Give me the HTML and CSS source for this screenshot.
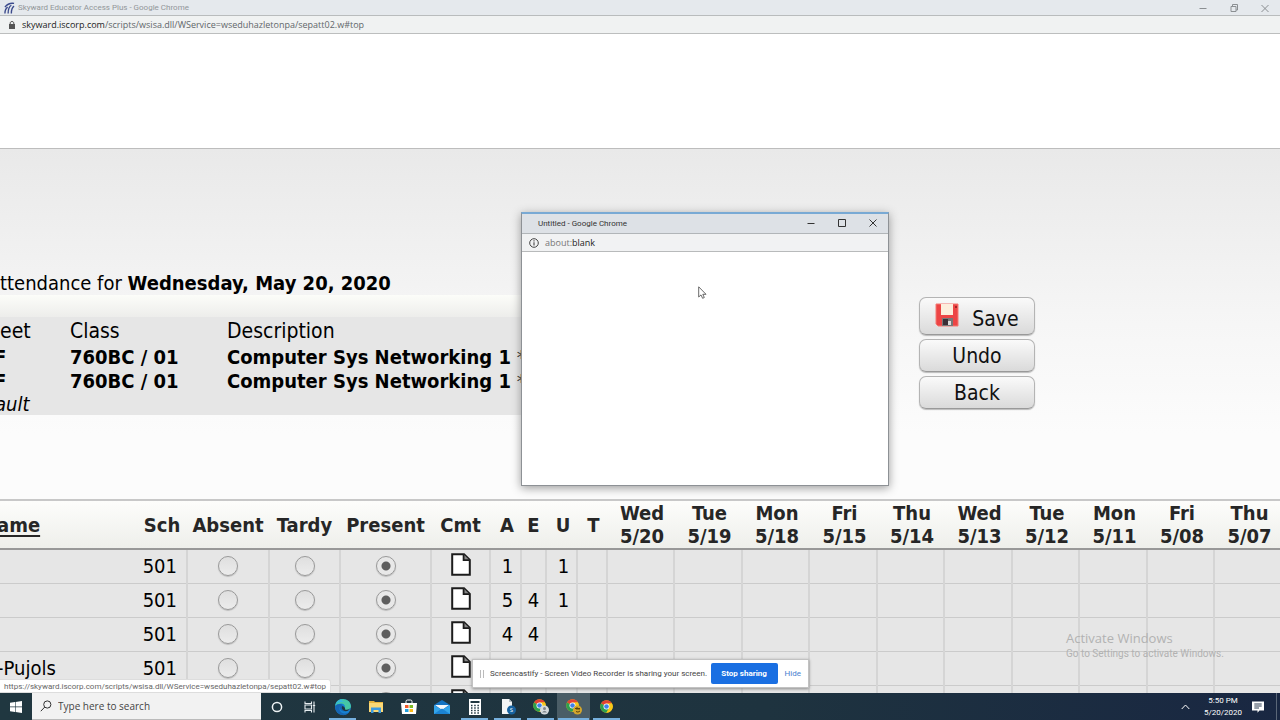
FILE: index.html
```html
<!DOCTYPE html>
<html lang="en">
<head>
<meta charset="utf-8">
<title>Skyward Educator Access Plus</title>
<link rel="stylesheet" href="styles.css">
</head>
<body>
<svg class="defs" width="0" height="0" aria-hidden="true">
  <symbol id="doc" viewBox="0 0 20 23"><path d="M1.2 1.2H13L18.8 7V21.8H1.2Z" fill="#fff" stroke="#1c1c1c" stroke-width="2"/><path d="M12.6 1.5V7.2H18.6" fill="#888" stroke="#1c1c1c" stroke-width="1.8"/></symbol>
  <symbol id="chrome" viewBox="0 0 48 48"><circle cx="24" cy="24" r="23" fill="#f8c819"/><path d="M24 24L4 12.500A23 23 0 0 1 44 12.500H24Z" fill="#e34133"/><path d="M4 12.500A23 23 0 0 0 24 47L34 29.500L24 24Z" fill="#2da04e"/><path d="M44 12.500A23 23 0 0 1 23 47L34 29.500L30 13Z" fill="#f8c819"/><circle cx="24" cy="24" r="11" fill="#fff"/><circle cx="24" cy="24" r="8.500" fill="#3f80e8"/></symbol>
</svg>
<div class="desktop">
  <header class="titlebar">
    <svg class="favicon" viewBox="0 0 12 12"><path d="M1 12Q1 7 4 5M4.500 12Q4.500 5 8 3M8 12Q8 6 11 4M1 5Q5 0 11 1" fill="none" stroke="#3b4a8c" stroke-width="1.500"/></svg>
    <span class="titletext">Skyward Educator Access Plus - Google Chrome</span>
    <div class="wincontrols">
      <button aria-label="Minimize"><svg viewBox="0 0 10 10"><path d="M1.500 5.500H8.500" /></svg></button>
      <button aria-label="Restore"><svg viewBox="0 0 10 10"><path d="M2 3.500H7V8.500H2ZM3.500 3.500V1.500H8.500V7H7"/></svg></button>
      <button aria-label="Close"><svg viewBox="0 0 10 10"><path d="M1.500 2L8.500 9M8.500 2L1.500 9"/></svg></button>
    </div>
  </header>
  <div class="addressbar">
    <svg class="lock" viewBox="0 0 8 10"><path d="M1 4H7V9H1Z" fill="#555"/><path d="M2.200 4V2.500Q4 0 5.800 2.500V4" fill="none" stroke="#555"/></svg>
    <span class="url"><b>skyward.iscorp.com</b>/scripts/wsisa.dll/WService=wseduhazletonpa/sepatt02.w#top</span>
  </div>

  <main class="page">
    <div class="banner"></div>
    <div class="upper">
      <section class="classinfo">
        <h1>ttendance for <b>Wednesday, May 20, 2020</b></h1>
        <div class="band"></div>
        <table class="classes">
          <colgroup><col class="c-sheet"><col class="c-class"><col></colgroup>
          <thead><tr><th>eet</th><th>Class</th><th>Description</th></tr></thead>
          <tbody>
            <tr><td class="cut">F</td><td>760BC / 01</td><td>Computer Sys Networking 1<span class="star"> *</span></td></tr>
            <tr><td class="cut">F</td><td>760BC / 01</td><td>Computer Sys Networking 1<span class="star"> *</span></td></tr>
            <tr class="last"><td class="default">ault</td><td></td><td></td></tr>
          </tbody>
        </table>
      </section>
      <div class="actions">
        <button class="save"><svg viewBox="0 0 24 24"><path d="M1 1H23V23H3L1 21Z" fill="#ed4545" stroke="#f47b74"/><path d="M6 1H18V12H6Z" fill="#fdeedd"/><path d="M7 15H18V23H7Z" fill="#777"/><path d="M8 16H13V22H8Z" fill="#3b3038"/><path d="M13 18H16V22H13Z" fill="#ddd"/><path d="M20 3H22V5H20Z" fill="#a32525"/></svg>Save</button>
        <button>Undo</button>
        <button>Back</button>
      </div>
    </div>
    <table class="roster">
      <colgroup><col class="w-name"><col class="w-sch"><col class="w-abs"><col class="w-tar"><col class="w-pre"><col class="w-cmt"><col class="w-a"><col class="w-e"><col class="w-u"><col class="w-t"><col class="w-day"><col class="w-day2"><col class="w-day"><col class="w-day2"><col class="w-day"><col class="w-day2"><col class="w-day"><col class="w-day2"><col class="w-day"><col class="w-day2"></colgroup>
      <thead><tr><th class="name"><a href="#">ame</a></th><th class="flush">Sch</th><th class="flush">Absent</th><th class="flush">Tardy</th><th class="flush">Present</th><th class="flush">Cmt</th><th>A</th><th class="flush">E</th><th>U</th><th>T</th><th>Wed<br>5/20</th><th>Tue<br>5/19</th><th>Mon<br>5/18</th><th>Fri<br>5/15</th><th>Thu<br>5/14</th><th>Wed<br>5/13</th><th>Tue<br>5/12</th><th>Mon<br>5/11</th><th>Fri<br>5/08</th><th>Thu<br>5/07</th></tr></thead>
      <tbody>
        <tr><td class="name"></td><td class="sch">501</td><td><input type="radio" name="r1" aria-label="Absent"></td><td><input type="radio" name="r1" aria-label="Tardy"></td><td><input type="radio" name="r1" aria-label="Present" checked></td><td><svg class="doc"><use href="#doc"/></svg></td><td class="num">1</td><td></td><td class="num">1</td><td></td><td></td><td></td><td></td><td></td><td></td><td></td><td></td><td></td><td></td><td></td></tr>
        <tr><td class="name"></td><td class="sch">501</td><td><input type="radio" name="r2" aria-label="Absent"></td><td><input type="radio" name="r2" aria-label="Tardy"></td><td><input type="radio" name="r2" aria-label="Present" checked></td><td><svg class="doc"><use href="#doc"/></svg></td><td class="num">5</td><td>4</td><td class="num">1</td><td></td><td></td><td></td><td></td><td></td><td></td><td></td><td></td><td></td><td></td><td></td></tr>
        <tr><td class="name"></td><td class="sch">501</td><td><input type="radio" name="r3" aria-label="Absent"></td><td><input type="radio" name="r3" aria-label="Tardy"></td><td><input type="radio" name="r3" aria-label="Present" checked></td><td><svg class="doc"><use href="#doc"/></svg></td><td class="num">4</td><td>4</td><td></td><td></td><td></td><td></td><td></td><td></td><td></td><td></td><td></td><td></td><td></td><td></td></tr>
        <tr><td class="name">-Pujols</td><td class="sch">501</td><td><input type="radio" name="r4" aria-label="Absent"></td><td><input type="radio" name="r4" aria-label="Tardy"></td><td><input type="radio" name="r4" aria-label="Present" checked></td><td><svg class="doc"><use href="#doc"/></svg></td><td></td><td></td><td></td><td></td><td></td><td></td><td></td><td></td><td></td><td></td><td></td><td></td><td></td><td></td></tr>
        <tr><td class="name"></td><td class="sch"></td><td><input type="radio" name="r5" aria-label="Absent"></td><td><input type="radio" name="r5" aria-label="Tardy"></td><td><input type="radio" name="r5" aria-label="Present" checked></td><td><svg class="doc"><use href="#doc"/></svg></td><td></td><td></td><td></td><td></td><td></td><td></td><td></td><td></td><td></td><td></td><td></td><td></td><td></td><td></td></tr>
      </tbody>
    </table>
    <div class="watermark"><div class="wm-title">Activate Windows</div><div>Go to Settings to activate Windows.</div></div>
    <div class="status">https://skyward.iscorp.com/scripts/wsisa.dll/WService=wseduhazletonpa/sepatt02.w#top</div>
    <div class="sharing">
      <span class="grip"></span>
      <span class="sharetext">Screencastify - Screen Video Recorder is sharing your screen.</span>
      <button>Stop sharing</button>
      <a href="#">Hide</a>
    </div>
  </main>

  <section class="popup">
    <div class="poptitle"><span>Untitled - Google Chrome</span>
      <div class="wincontrols dark">
        <button aria-label="Minimize"><svg viewBox="0 0 10 10"><path d="M1.500 5.500H8.500"/></svg></button>
        <button aria-label="Maximize"><svg viewBox="0 0 10 10"><path d="M1.500 1.500H8.500V8.500H1.500Z"/></svg></button>
        <button aria-label="Close"><svg viewBox="0 0 10 10"><path d="M1.500 1.500L8.500 8.500M8.500 1.500L1.500 8.500"/></svg></button>
      </div>
    </div>
    <div class="popaddress"><svg viewBox="0 0 10 10"><circle cx="5" cy="5" r="4.300" fill="none" stroke="#444" stroke-width="1"/><path d="M5 4.300V7.600M5 2.300V3.400" stroke="#444" stroke-width="1.100"/></svg><span>about:<b>blank</b></span></div>
    <div class="popbody"></div>
  </section>
  <svg class="cursor" viewBox="0 0 9 13"><path d="M.7.8V11L3 8.900L4.600 12.300L6.300 11.500L4.800 8.300H8Z" fill="#fff" stroke="#444" stroke-width=".8"/></svg>

  <footer class="taskbar">
    <button class="start" aria-label="Start"><svg viewBox="0 0 12 12"><path d="M0 1.800L5 1.100V5.600H0ZM5.600 1L12 0V5.600H5.600ZM0 6.300H5V10.900L0 10.200ZM5.600 6.300H12V12L5.600 11Z" fill="#fff"/></svg></button>
    <label class="search"><svg viewBox="0 0 12 12"><circle cx="7.300" cy="4.500" r="3.600" fill="none" stroke="#333"/><path d="M4.800 7L.8 11.200" stroke="#333"/></svg><input type="text" placeholder="Type here to search" aria-label="Type here to search"></label>
    <nav class="apps">
      <button aria-label="Cortana"><svg viewBox="0 0 16 16"><circle cx="8" cy="8" r="4.600" fill="none" stroke="#eef3f5" stroke-width="1.500"/></svg></button>
      <button aria-label="Task view"><svg viewBox="0 0 16 16"><path d="M3 2.500V4.500H9.500V2.500M3 13.500V11.500H9.500V13.500M3 6H9.500V10H3ZM12 2.500V13.500M10.800 6.500H13.200" fill="none" stroke="#e5ecef" stroke-width="1.100"/></svg></button>
      <button class="open" aria-label="Edge"><svg class="big" viewBox="0 0 18 18"><circle cx="9" cy="9" r="8" fill="#1682d4"/><path d="M1.200 8Q2 1 9 1Q16 1.500 17 8Q17 12 12 12Q10 11.800 11 9.500Q11 5.500 7 5.500Q3 5.500 1.200 8Z" fill="#45c7a4"/><path d="M1.200 7.500Q3 1 9 1Q5 2 12 4Q4 3 1.200 7.500Z" fill="#35b9dc"/><path d="M6 8Q4 14 10 15.500Q14 16 16 12.500Q13 18 8 17Q1 15 1.200 8Q3 5.500 7 6Q9 6.500 9 9Q7 12 11 13.500Q8 14 6 11Z" fill="#1565b4"/><path d="M8.200 8Q6.500 12 11.500 13.300Q15 13 16.800 9.500Q15 12.500 11 11.500Q11.600 9 8.200 8Z" fill="#203640"/></svg></button>
      <button aria-label="File Explorer"><svg viewBox="0 0 16 16"><path d="M1 2H6L7 3H15V13H1Z" fill="#e8b63f"/><path d="M1 4H15V13H1Z" fill="#fbd976"/><path d="M3 8.500H13V14H10.500V11H5.500V14H3Z" fill="#3d9be0"/></svg></button>
      <button aria-label="Microsoft Store"><svg viewBox="0 0 16 16"><path d="M5 4V2.500Q5 1 6.500 1H9.500Q11 1 11 2.500V4" fill="none" stroke="#fff"/><path d="M0 4H16L15 15H1Z" fill="#fff"/><path d="M4 6H7.500V9H4Z" fill="#f15a2b"/><path d="M8.500 6H12V9H8.500Z" fill="#7dba25"/><path d="M4 10H7.500V13H4Z" fill="#24a0de"/><path d="M8.500 10H12V13H8.500Z" fill="#fbba19"/></svg></button>
      <button aria-label="Mail"><svg viewBox="0 0 16 16"><path d="M0 6L8 1L16 6V15H0Z" fill="#1473c2"/><path d="M1 6H15L8 11Z" fill="#f4f8fb"/><path d="M0 6L8 11L16 6V15H0Z" fill="#35a5ea"/><path d="M0 15L8 9.500L16 15Z" fill="#1b83d3"/></svg></button>
      <button class="open" aria-label="Calculator"><svg viewBox="0 0 16 16"><path d="M2 0H14V16H2Z" fill="#fff"/><path d="M3.500 3H12.500" stroke="#203640" stroke-width="2"/><path d="M4 6.500H12.500M4 9H12.500M4 11.500H12.500M4 14H12.500" stroke="#203640" stroke-width="1.300" stroke-dasharray="1.500 1.700"/></svg></button>
      <button class="open" aria-label="Skyward"><svg viewBox="0 0 16 16"><path d="M2 0H9L12 3V15H2Z" fill="#f3f5f6"/><path d="M9 0V3H12" fill="#b7bfc4"/><circle cx="11.500" cy="11" r="4.500" fill="#17629f"/><text x="11.500" y="13.300" font-size="6" text-anchor="middle" fill="#fff">S</text></svg></button>
      <button class="open" aria-label="Chrome profile"><svg viewBox="0 0 16 16"><svg width="13" height="13"><use href="#chrome"/></svg><circle cx="11.500" cy="11" r="4.500" fill="#d6dadd"/><circle cx="11.500" cy="9.500" r="1.500" fill="#7f878d"/><path d="M9 13.500Q11.500 10 14 13.500Z" fill="#7f878d"/></svg></button>
      <button class="open active" aria-label="Chrome window"><svg viewBox="0 0 16 16"><svg width="13" height="13"><use href="#chrome"/></svg><circle cx="11.500" cy="11" r="4.500" fill="#d3a62c"/><path d="M9 9.500H14M10 12.500Q12 14 14 12M11 8V11M13 9V11" fill="none" stroke="#59430d"/></svg></button>
      <button class="open" aria-label="Chrome"><svg viewBox="0 0 16 16"><svg x="1" y="1" width="14" height="14"><use href="#chrome"/></svg></svg></button>
    </nav>
    <div class="tray">
      <svg class="chev" viewBox="0 0 9 6"><path d="M.7 5L4.500 1L8.300 5" fill="none" stroke="#fff"/></svg>
      <div class="clock"><div>5:50 PM</div><div>5/20/2020</div></div>
      <svg class="note" viewBox="0 0 12 12"><path d="M0 .5H12V9.500H7.500L5.500 11.800V9.500H0Z" fill="#fff"/><path d="M2.300 3H9.700M2.300 5H9.700M2.300 7H7" stroke="#1a2a44" stroke-width=".9"/></svg>
      <span class="showdesk"></span>
    </div>
  </footer>
</div>
</body>
</html>
```
FILE: styles.css
```css
* { box-sizing: border-box; }
body { margin: 0; font-family: "Open Sans", "Noto Sans", sans-serif; overflow: hidden; }
button { font: inherit; border: 0; padding: 0; background: none; }
svg { display: block; flex: none; }
.defs { position: absolute; }
.desktop { position: relative; display: flex; flex-direction: column; height: 100vh; overflow: hidden; }

.titlebar { display: flex; align-items: center; height: 16px; padding-left: 4px; background: #e5e9ed; border-bottom: 1px solid #b9bcbd; font-family: Roboto, sans-serif; font-size: 8px; color: #929699; }
.favicon { width: 11px; height: 12px; margin-right: 3px; }
.titletext { flex: 1; }
.wincontrols { display: flex; padding-right: 10px; gap: 21px; }
.wincontrols button, .wincontrols svg { width: 10px; height: 10px; }
.wincontrols path { fill: none; stroke: #8b8f92; stroke-width: 1; }
.wincontrols.dark path { stroke: #333; }
.addressbar { display: flex; align-items: center; gap: 6px; height: 18px; padding-left: 8px; background: #f0f2f2; border-bottom: 1px solid #bcbebe; font-size: 9px; color: #62676a; }
.addressbar b, .popaddress b { font-weight: 400; color: #222; }
.lock { width: 8px; height: 10px; }

.page { position: relative; flex: 1; min-height: 0; overflow: hidden; background: linear-gradient(#e9e9e9 115px, #f6f6f6 290px, #fcfcfc 400px); font-family: "DejaVu Sans Condensed", "Noto Sans", sans-serif; font-size: 20px; }
.banner { height: 115px; background: #fff; border-bottom: 1px solid #bdbdbd; }
.upper { display: flex; height: 350px; gap: 58px; padding-top: 122px; }
.classinfo { width: 861px; }
h1 { margin: 0; font-size: 20px; line-height: 24px; font-weight: 400; white-space: nowrap; }
.band { height: 22px; background: linear-gradient(#fcfdf9, #ededeb); }
.classes { width: 100%; table-layout: fixed; border-collapse: collapse; background: #e6e6e6; white-space: nowrap; }
.classes th, .classes td { padding: 0; height: 24px; line-height: 24px; text-align: left; font-weight: 700; }
.classes th { height: 28px; font-weight: 400; font-size: 21px; }
.classes .last td { height: 22px; line-height: 22px; }
.c-sheet { width: 70px; }
.c-class { width: 157px; }
.classes .cut { text-indent: -6px; }
.classes .default { font-weight: 400; font-style: italic; text-indent: -5px; }
.classes .star { font-weight: 400; }
.actions { display: flex; flex-direction: column; gap: 4px; width: 116px; padding-top: 26px; }
.actions button { display: flex; align-items: center; justify-content: center; height: 33px; padding-top: 1px; border: 1px solid #b4b4b4; border-bottom-color: #999; border-radius: 7px; background: linear-gradient(#fafafa, #dadada); box-shadow: 0 1px 1px #bbb; color: #111; font-size: 21px; }
.actions .save { height: 38px; gap: 13px; padding-top: 5px; }
.save svg { width: 24px; height: 24px; margin-bottom: 7px; }

.roster { width: 1282px; table-layout: fixed; border-collapse: collapse; background: #e6e6e6; }
.roster th { height: 49px; padding: 1px 0 0 3px; border-top: 2px solid #c8c8c8; border-bottom: 2px solid #989898; background: linear-gradient(#fdfdfb, #eeefeb); color: #262626; line-height: 23px; font-weight: 700; }
.roster th.flush { padding-left: 0; }
.roster td { height: 34px; padding: 0; border: 2px solid #d5d5d5; border-top: 1px solid #cbcbcb; border-bottom: 1px solid #cbcbcb; text-align: center; line-height: 24px; }
.roster .name { text-align: left; border-left: 0; white-space: nowrap; padding-left: 0; text-indent: -3px; }
.roster td.name { border-right: 0; }
.roster .sch { border-left: 0; text-align: right; padding-right: 9px; }
.roster .num { padding-left: 4px; }
.name a { color: inherit; text-underline-offset: 3px; }
.w-name { width: 137px; } .w-sch { width: 50px; } .w-abs { width: 82px; } .w-tar { width: 71px; } .w-pre { width: 91px; }
.w-cmt { width: 59px; } .w-a { width: 31px; } .w-e { width: 25px; } .w-u { width: 31px; } .w-t { width: 30px; }
.w-day { width: 67px; } .w-day2 { width: 68px; }
.roster input { display: block; appearance: none; width: 20px; height: 20px; margin: 0 auto; border: 1px solid #999; border-radius: 50%; background: linear-gradient(#dfdfdf, #ececec); box-shadow: 0 1px 1px #bbb; }
.roster input:checked { background: radial-gradient(circle, #5e5e5e 4px, #e8e8e8 5px); }
.doc { width: 20px; height: 23px; margin: 0 auto 4px; }

.watermark { position: absolute; left: 1066px; bottom: 33px; font: 10px/13px Roboto, sans-serif; color: #b2b2b2; white-space: nowrap; }
.wm-title { font-family: "Open Sans", sans-serif; font-size: 13px; line-height: 17px; }
.status { position: absolute; left: 0; bottom: 0; height: 14px; padding: 0 4px; border: 1px solid #ddd; border-left: 0; border-radius: 0 3px 0 0; background: #fff; font: 8px/13px Roboto, sans-serif; color: #666; white-space: nowrap; }
.sharing { position: absolute; left: 472px; bottom: 5px; display: flex; align-items: center; height: 29px; width: 337px; padding: 0 7px; background: #fff; border: 1px solid #c2c2c2; box-shadow: 0 1px 3px #888; font: 8px/12px Roboto, sans-serif; color: #444; white-space: nowrap; }
.grip { width: 4px; height: 8px; margin-right: 6px; border: solid #bbb; border-width: 0 1px; }
.sharetext { flex: 1; min-width: 0; }
.sharing button { flex: none; width: 67px; height: 21px; margin-right: 7px; border-radius: 2px; background: #1a6fe2; color: #fff; font-weight: 700; }
.sharing a { color: #4a80cf; text-decoration: none; }

.popup { position: absolute; left: 521px; top: 212px; width: 368px; height: 274px; display: flex; flex-direction: column; border: 1px solid #8d9195; border-top: 2px solid #78a9d4; background: #fff; box-shadow: 0 2px 9px #999; }
.poptitle { display: flex; align-items: center; justify-content: space-between; height: 20px; padding: 0 0 1px 16px; border-bottom: 1px solid #b1b5b8; background: #dde1e6; font-family: Roboto, sans-serif; font-size: 8px; color: #333; }
.popaddress { display: flex; align-items: center; gap: 6px; height: 18px; padding-left: 7px; border-bottom: 1px solid #b8babb; background: #f1f2f3; font-size: 9px; color: #777; }
.popaddress svg { width: 10px; height: 10px; }
.popbody { flex: 1; }
.cursor { position: absolute; left: 698px; top: 286px; width: 9px; height: 13px; }

.taskbar { display: flex; flex: none; height: 27px; background: linear-gradient(90deg, #203740, #1e333f 60%, #192742); color: #fff; }
.start { width: 32px; display: grid; place-items: center; }
.start svg { width: 12px; height: 12px; }
.search { display: flex; align-items: center; width: 229px; padding-left: 8px; gap: 6px; background: #f2f2f2; border-bottom: 1px solid #bbb; }
.search svg { width: 12px; height: 12px; }
.search input { flex: 1; min-width: 0; border: 0; padding: 0; background: none; font: 10px/16px "Open Sans", sans-serif; color: #333; }
.search input::placeholder { color: #444; opacity: 1; }
.apps { display: flex; flex: 1; margin-left: -1px; }
.apps button { display: grid; place-items: center; width: 33px; }
.apps svg { width: 16px; height: 16px; }
.apps .big { width: 18px; height: 18px; }
.apps .open { background: linear-gradient(#76b0de, #76b0de) bottom / 27px 2px no-repeat; }
.apps .active { background: linear-gradient(#76b0de, #76b0de) bottom / 31px 2px no-repeat, #4a5d66; }
.apps svg svg { width: 13px; height: 13px; }
.tray { display: flex; align-items: center; }
.chev { width: 9px; height: 6px; margin-right: 10px; }
.clock { width: 46px; font-family: Roboto, sans-serif; font-size: 8px; line-height: 12px; text-align: center; }
.note { width: 12px; height: 12px; margin: 0 12px 0 6px; }
.showdesk { width: 4px; height: 100%; border-left: 1px solid #5a6677; }
```
